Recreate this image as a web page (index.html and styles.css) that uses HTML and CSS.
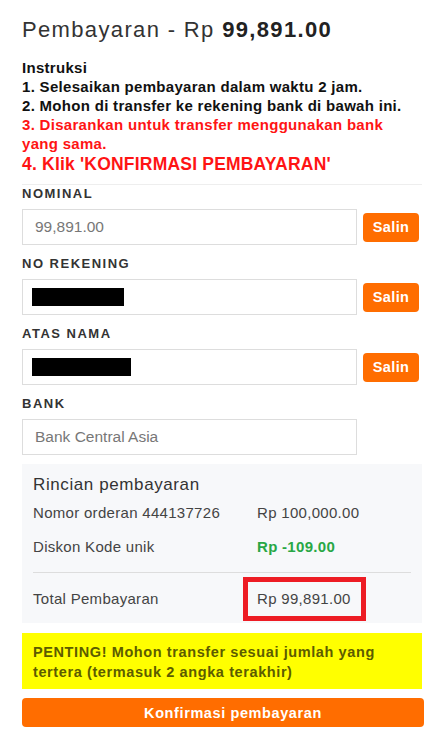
FILE: index.html
```html
<!DOCTYPE html>
<html lang="id">
<head>
<meta charset="utf-8">
<title>Pembayaran</title>
<link rel="stylesheet" href="styles.css">
</head>
<body>
<div class="page">
  <h1 class="title">Pembayaran - Rp <strong>99,891.00</strong></h1>

  <div class="instructions">
    <p>Instruksi</p>
    <p>1. Selesaikan pembayaran dalam waktu 2 jam.</p>
    <p>2. Mohon di transfer ke rekening bank di bawah ini.</p>
    <p class="warn">3. Disarankan untuk transfer menggunakan bank yang sama.</p>
    <p class="warn big">4. Klik 'KONFIRMASI PEMBAYARAN'</p>
  </div>

  <div class="fields">
    <div class="field">
      <div class="label">NOMINAL</div>
      <div class="row">
        <div class="box">99,891.00</div>
        <button class="copy">Salin</button>
      </div>
    </div>
    <div class="field">
      <div class="label">NO REKENING</div>
      <div class="row">
        <div class="box"><span class="redact redact-acc"></span></div>
        <button class="copy">Salin</button>
      </div>
    </div>
    <div class="field">
      <div class="label">ATAS NAMA</div>
      <div class="row">
        <div class="box"><span class="redact redact-name"></span></div>
        <button class="copy">Salin</button>
      </div>
    </div>
    <div class="field">
      <div class="label">BANK</div>
      <div class="row">
        <div class="box">Bank Central Asia</div>
      </div>
    </div>
  </div>

  <div class="summary">
    <div class="sum-title">Rincian pembayaran</div>
    <div class="sum-row">
      <span>Nomor orderan 444137726</span>
      <span>Rp 100,000.00</span>
    </div>
    <div class="sum-row">
      <span>Diskon Kode unik</span>
      <span class="discount">Rp -109.00</span>
    </div>
    <div class="sum-total">
      <div class="sum-row">
        <span>Total Pembayaran</span>
        <span><span class="hl">Rp 99,891.00</span></span>
      </div>
    </div>
  </div>

  <div class="notice">PENTING! Mohon transfer sesuai jumlah yang tertera (termasuk 2 angka terakhir)</div>

  <button class="confirm">Konfirmasi pembayaran</button>
</div>
</body>
</html>
```

FILE: styles.css
```css
* { box-sizing: border-box; }

body {
  margin: 0;
  background: #ffffff;
  font-family: "Liberation Sans", Arial, sans-serif;
  color: #333333;
}

.page {
  width: 445px;
  padding: 15px 23px 0 22px;
}

.title {
  margin: 0;
  font-size: 22px;
  line-height: 30px;
  font-weight: 400;
  letter-spacing: 1.35px;
  color: #333333;
}

.title strong {
  font-weight: 700;
  color: #222222;
}

.instructions {
  margin-top: 13px;
  padding-right: 12px;
}

.instructions p {
  margin: 0;
  font-size: 15px;
  line-height: 19px;
  font-weight: 700;
  letter-spacing: 0.3px;
  color: #111111;
}

.instructions .warn {
  color: #ff1414;
}

.instructions .big {
  font-size: 17.5px;
  line-height: 22px;
  font-weight: 700;
  letter-spacing: 0.2px;
}

.fields {
  margin-top: 9px;
  padding-top: 1px;
  border-top: 1px solid #eeeeee;
  display: flex;
  flex-direction: column;
  gap: 11px;
}

.label {
  font-size: 13px;
  line-height: 16px;
  font-weight: 700;
  letter-spacing: 1.5px;
  color: #333333;
  margin-bottom: 7px;
}

.row {
  display: flex;
  align-items: center;
  gap: 6px;
}

.box {
  width: 335px;
  height: 36px;
  border: 1px solid #dddddd;
  padding-left: 12px;
  display: flex;
  align-items: center;
  font-size: 15.5px;
  color: #777777;
  background: #ffffff;
}

.redact {
  display: block;
  height: 18px;
  background: #000000;
  margin-left: -3px;
}

.redact-acc { width: 92px; }
.redact-name { width: 99px; }

.copy {
  width: 56px;
  height: 29px;
  border: none;
  border-radius: 4px;
  background: #ff6d00;
  color: #ffffff;
  font-family: "Liberation Sans", Arial, sans-serif;
  font-size: 14.5px;
  font-weight: 700;
  letter-spacing: 0.4px;
  padding: 0;
}

.summary {
  margin-top: 9px;
  background: #f7f8fa;
  padding: 10px 11px 2px;
}

.sum-title {
  font-size: 17px;
  line-height: 22px;
  letter-spacing: 0.6px;
  color: #333333;
}

.sum-row {
  display: grid;
  grid-template-columns: 224px 1fr;
  align-items: center;
  font-size: 15px;
  line-height: 34px;
  letter-spacing: 0.3px;
  color: #444444;
}

.discount {
  font-weight: 700;
  color: #28a745;
}

.sum-total {
  margin-top: 8px;
  border-top: 1px solid #dddddd;
  padding-top: 4px;
}

.hl {
  display: inline-block;
  margin-left: -14px;
  padding: 0 10px 0 9px;
  border: 5px solid #ed1c24;
}

.notice {
  margin-top: 10px;
  background: #ffff00;
  padding: 9px 11px 7px;
  font-size: 14.5px;
  line-height: 20px;
  font-weight: 700;
  letter-spacing: 0.6px;
  color: #5c5c00;
}

.confirm {
  display: block;
  margin-top: 9px;
  width: 402px;
  height: 29px;
  border: none;
  border-radius: 4px;
  background: #ff6d00;
  color: #ffffff;
  font-family: "Liberation Sans", Arial, sans-serif;
  font-size: 14.5px;
  font-weight: 700;
  letter-spacing: 0.6px;
  padding: 0 0 0 20px;
}
```
